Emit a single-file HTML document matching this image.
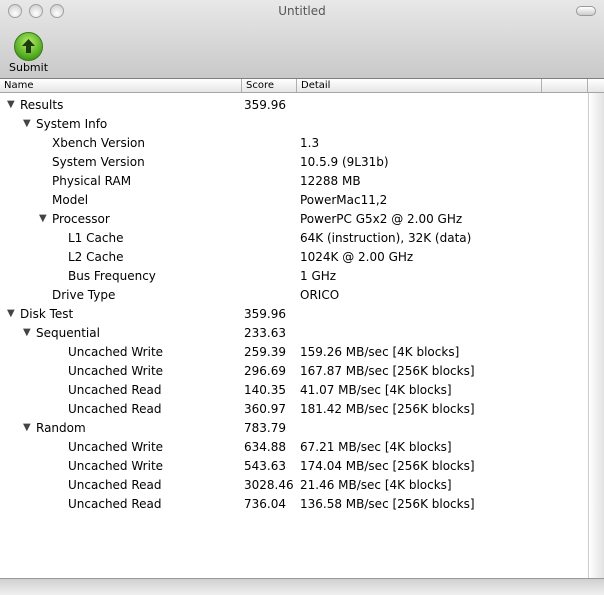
<!DOCTYPE html><html><head><style>
body{margin:0;width:604px;height:594px;overflow:hidden;font-family:"DejaVu Sans","Liberation Sans",sans-serif;background:#fff;position:relative}
#top{position:absolute;left:0;top:0;width:604px;height:78px;background:linear-gradient(#e8e8e8,#c9c9c9);border-bottom:1px solid #7f7f7f}
.tl{position:absolute;top:4px;width:12px;height:12px;border-radius:50%;background:radial-gradient(circle at 50% 70%,#fff,#c8c8c8);border:1px solid #a0a0a0}
#title{position:absolute;top:4px;left:0;width:604px;text-align:center;font-size:12px;color:#555}
#pill{position:absolute;right:8px;top:6px;width:18px;height:8px;border-radius:5px;border:1px solid #999;background:linear-gradient(#fff,#ccc)}
#btn{position:absolute;left:14px;top:32px;width:27px;height:27px;border-radius:50%;background:radial-gradient(circle at 50% 35%,#b4f06a,#4aa51a 70%,#2f7a10);border:1px solid #3c7a1e}
#lbl{position:absolute;left:9px;top:61px;font-size:11px;color:#000}
#hdr{position:absolute;top:79px;left:0;width:604px;height:13px;background:linear-gradient(#fff,#e6e6e6);border-bottom:1px solid #a5a5a5;font-size:10px;line-height:13px}
#hdr span{position:absolute;top:0;height:13px;padding-left:4px;border-right:1px solid #b0b0b0;box-sizing:border-box}
#vs{position:absolute;left:588px;top:93px;width:16px;height:485px;background:linear-gradient(90deg,#fff,#e0e0e0);border-left:1px solid #ccc}
#bot{position:absolute;left:0;top:578px;width:604px;height:16px;background:linear-gradient(#d0d0d0,#f0f0f0);border-top:1px solid #999}
.r{position:absolute;font-size:12px;height:19px;line-height:19px;white-space:nowrap;color:#000}
.t{position:absolute;font-size:10px;color:#444}
</style></head><body>
<div id="top"><div class="tl" style="left:8px"></div><div class="tl" style="left:29px"></div><div class="tl" style="left:50px"></div><div id="title">Untitled</div><div id="pill"></div>
<div id="btn"><svg width="27" height="27" style="position:absolute;left:0;top:0"><path d="M13.5 6 L20 13 H16 V20 H11 V13 H7 Z" fill="#1e3a10"/></svg></div><div id="lbl">Submit</div></div>
<div id="hdr"><span style="left:0;width:242px">Name</span><span style="left:242px;width:55px">Score</span><span style="left:297px;width:245px">Detail</span><span style="left:542px;width:46px"></span></div>
<div id="vs"></div><div id="bot"></div>
<div id="rows"></div>
<script>
var d=[[0,1,"Results","359.96",""],[1,1,"System Info","",""],[2,0,"Xbench Version","","1.3"],[2,0,"System Version","","10.5.9 (9L31b)"],[2,0,"Physical RAM","","12288 MB"],[2,0,"Model","","PowerMac11,2"],[2,1,"Processor","","PowerPC G5x2 @ 2.00 GHz"],[3,0,"L1 Cache","","64K (instruction), 32K (data)"],[3,0,"L2 Cache","","1024K @ 2.00 GHz"],[3,0,"Bus Frequency","","1 GHz"],[2,0,"Drive Type","","ORICO"],[0,1,"Disk Test","359.96",""],[1,1,"Sequential","233.63",""],[3,0,"Uncached Write","259.39","159.26 MB/sec [4K blocks]"],[3,0,"Uncached Write","296.69","167.87 MB/sec [256K blocks]"],[3,0,"Uncached Read","140.35","41.07 MB/sec [4K blocks]"],[3,0,"Uncached Read","360.97","181.42 MB/sec [256K blocks]"],[1,1,"Random","783.79",""],[3,0,"Uncached Write","634.88","67.21 MB/sec [4K blocks]"],[3,0,"Uncached Write","543.63","174.04 MB/sec [256K blocks]"],[3,0,"Uncached Read","3028.46","21.46 MB/sec [4K blocks]"],[3,0,"Uncached Read","736.04","136.58 MB/sec [256K blocks]"]];
var h="";d.forEach(function(r,i){var y=96+i*19,x=20+r[0]*16;
if(r[1])h+='<div class="t" style="left:'+(x-13)+'px;top:'+(y+3)+'px">▼</div>';
h+='<div class="r" style="left:'+x+'px;top:'+y+'px">'+r[2]+'</div><div class="r" style="left:244px;top:'+y+'px;width:53px;overflow:hidden">'+r[3]+'</div><div class="r" style="left:300px;top:'+y+'px">'+r[4]+'</div>';});
document.getElementById("rows").innerHTML=h;
</script></body></html>
